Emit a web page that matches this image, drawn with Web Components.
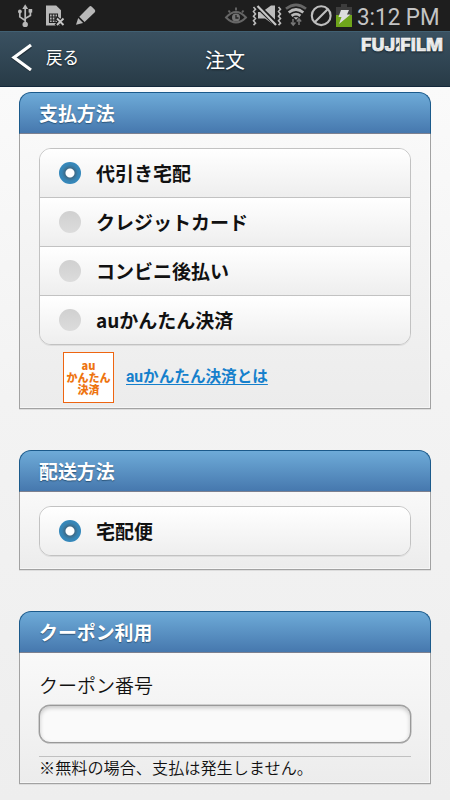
<!DOCTYPE html>
<html lang="ja">
<head>
<meta charset="utf-8">
<title>注文</title>
<style>
html{height:100%}
body{margin:0;width:450px;height:800px;overflow:hidden;background:linear-gradient(#fafafa 87px,#f3f3f3 400px,#eee 800px);font-family:"Noto Sans CJK JP","Noto Sans",sans-serif;color:#111}
</style>
</head>
<body>
<order-app></order-app>
<script>
const define = (name, html, setup) => customElements.define(name, class extends HTMLElement {
  constructor() {
    super();
    const t = document.createElement('template');
    t.innerHTML = html;
    this.attachShadow({ mode: 'open' }).append(t.content.cloneNode(true));
  }
  connectedCallback() { if (setup) setup(this, this.shadowRoot); }
});

define('status-bar', `<style>
:host{display:flex;height:31px;background:#1e1e1e;box-sizing:border-box}
svg{display:block;flex:none}
</style>
<svg width="450" height="31" viewBox="0 0 450 31">
  <g fill="none" stroke="#b8b8b8" stroke-width="1.7">
    <path d="M25.2 8v15M25.2 20.5l-5.4-3.6v-4.5M25.2 18.5l5.2-3v-4.3"/>
  </g>
  <g fill="#b8b8b8"><path d="M22.3 9l2.9-4.8L28.1 9z"/><circle cx="25.2" cy="24.4" r="2.7"/><circle cx="19.9" cy="11.5" r="1.9"/><path d="M28.6 9h3.6v3.6h-3.6z"/>
    <path d="M46 5.5h10.2l4.8 4.8v7l-1 8.2H46z"/>
    <path d="M76 24.8l2.2-6.8 4.9 4.9zM79.3 16.8L89.2 6.7q1.2-1.2 2.6 0l3 3q1 1.2 0 2.5L84.6 22.1z"/></g>
  <path d="M49.500 14h8v8.500h-8zM52.200 14v8.500M55 14v8.500M49.500 17h8M49.500 20h8" fill="#b8b8b8" stroke="#1e1e1e" stroke-width="1.1"/>
  <path d="M56 17.500l8.500 8.500M64.500 17.500l-8.500 8.500" stroke="#1e1e1e" stroke-width="4"/>
  <path d="M57 18.500l6.500 6.500M63.500 18.500L57 25" stroke="#c5c5c5" stroke-width="1.9"/>
  <g fill="none" stroke="#666" stroke-width="1.9"><path d="M226 17.500q10-11 20 0q-10 10-20 0z"/><path d="M228.500 10.500l1.500 2M236 7.500v3M243.500 10.500l-1.500 2"/></g>
  <circle cx="236" cy="17.500" r="4" fill="#737373"/><path d="M236 15v3h2.500" fill="none" stroke="#222" stroke-width="1.3"/>
  <path d="M258 12h4l9-6.500h4v18h-3l-7-5h-7z" fill="#bcbcbc"/>
  <path d="M257 5.500L277 25" stroke="#1e1e1e" stroke-width="5"/>
  <path d="M257.500 6L276 25" stroke="#c8c8c8" stroke-width="2.2"/>
  <path d="M253.500 7l2 2.300-2 2.300 2 2.300-2 2.300 2 2.300-2 2.300 2 2.300-2 2M278.500 7l2 2.300-2 2.300 2 2.300-2 2.300 2 2.300-2 2.300 2 2.300-2 2" fill="none" stroke="#bcbcbc" stroke-width="1.6"/>
  <g fill="none" stroke-width="2.700"><path d="M286 8.800q10-8 20 0" stroke="#666"/><path d="M288.700 12.500q7.300-6 14.600 0" stroke="#bababa"/><path d="M291.600 15.900q4.400-3.600 8.800 0" stroke="#bababa"/></g>
  <path d="M293.500 17.200h5l-2.500 2.500z" fill="#bababa"/>
  <path d="M293 19v6M291 22.500l2.200 2.500 2.200-2.500M299 25v-6M296.800 21.500l2.200-2.500 2.200 2.500" fill="none" stroke="#777" stroke-width="1.5"/>
  <g fill="none" stroke="#bebebe" stroke-width="2.1"><circle cx="321.200" cy="15.700" r="9.400"/><path d="M314.700 22.200l13-13"/></g>
  <path d="M336 7h5V4h6v3h5v8h-16z" fill="#3d3d3d"/><path d="M336 15h16v12h-16z" fill="#6fa51b"/>
  <path d="M341 10h8l-2 4.500h3.500L339 24l2.500-7h-3z" fill="#ddd"/>
  <text x="357" y="25" font-family="Roboto,sans-serif" font-size="24" textLength="82.500" lengthAdjust="spacingAndGlyphs" fill="#c4c4c4">3:12 PM</text>
</svg>`);

define('nav-bar', `<style>
:host{display:grid;grid-template-columns:1fr 50px 1fr;height:56px;box-sizing:border-box;border-bottom:1px solid #14283a;border-top:1px solid #416072;background:linear-gradient(#3a5161,#283b47);color:#fff;text-shadow:0 1px 2px #0008}
.back{display:flex;align-items:center;padding:0 0 4px 11px;gap:13px;font-size:16.500px;line-height:24px}
.back span{margin-top:-3px}
.title{font-size:20px;line-height:56px;text-align:center}
.brand{justify-self:end;padding:0 4px 0 0}
svg{display:block}
.brand svg{overflow:visible}
</style>
<div class="back"><svg width="22" height="30" viewBox="0 0 22 30"><path d="M20 3.500L3 15.500 20 27.500" fill="none" stroke="#0005" stroke-width="3.500"/><path d="M20 2L3 14.500 20 27" fill="none" stroke="#fff" stroke-width="3.2"/></svg><span>戻る</span></div>
<div class="title"><slot></slot></div>
<div class="brand"><svg width="86" height="32" viewBox="0 0 86 32"><text x="1" y="19.200" font-family="Inter,sans-serif" font-weight="800" font-size="17.500" textLength="82" lengthAdjust="spacingAndGlyphs" fill="#fff" stroke="#fff" stroke-width=".5">FUJIFILM</text><path d="M35 13.500l4-3v3l-4 3z" fill="#344c5b"/></svg></div>`);

define('form-panel', `<style>
:host{display:block;box-sizing:border-box;width:412px;border-radius:12px 12px 0 0;box-shadow:0 1px 0 #ddd}
h2{margin:0;height:42px;box-sizing:border-box;border:1px solid #1b5a8b;border-bottom-color:#7d8190;border-radius:12px 12px 0 0;padding-left:19px;font-size:18.900px;line-height:39px;font-weight:700;color:#fff;background:linear-gradient(#6eabd8,#4678ae);text-shadow:0 1px 1px #2c5579}
.body{box-sizing:border-box;height:calc(100% - 42px);border:1px solid #a2a2a2;border-top:0;padding:14px 19px 0;background:linear-gradient(#f9f9f9,#ececec);box-shadow:inset -1px -1px #fff8}
</style><h2></h2><div class="body"><slot></slot></div>`, (el, r) => r.querySelector('h2').textContent = el.getAttribute('heading'));

define('choice-group', `<style>
:host{display:flex;flex-direction:column;box-sizing:border-box;border:1px solid #c2c2c2;border-radius:12px;overflow:hidden;box-shadow:0 1px 0 #ddd}
::slotted(:not(:first-child)){border-top:1px solid #c2c2c2}
</style><slot></slot>`);

define('choice-row', `<style>
:host{display:flex;flex:1;box-sizing:border-box;align-items:center;padding-left:19px;gap:15px;background:linear-gradient(#fff,#eee);font-size:19px;font-weight:700;line-height:28px}
i{width:22px;height:22px;border-radius:50%;background:linear-gradient(#d0d0d0,#dcdcdc)}
:host([checked]) i{background:radial-gradient(circle,#fff 0 4px,#3e6c8a 5px,#3784b3 8px,#3589bd 11px)}
</style><i></i><span><slot></slot></span>`);

define('au-info', `<style>
:host{display:flex;align-items:center;gap:12px;padding:7px 0 0 24px}
.logo{box-sizing:border-box;width:51px;height:51px;border:1px solid #ee6511;background:#fff;color:#ee7410;font-size:11px;line-height:12px;font-weight:900;text-align:center;padding-top:6px;white-space:nowrap}
.logo div{margin:0 -4px}
a{font-size:15.600px;font-weight:700;line-height:22px;color:#1580cc;text-decoration:underline;text-decoration-thickness:1px;text-underline-offset:2px;margin-top:-3px}
a span{font-family:Roboto,sans-serif}
</style><div class="logo"><div>au</div><div>かんたん</div><div>決済</div></div><a><span>au</span>かんたん決済とは</a>`);

define('coupon-field', `<style>
:host{display:block}
label{display:block;font-size:19px;line-height:28px;padding-top:4px;font-weight:350}
input{display:block;box-sizing:border-box;width:372px;height:38px;margin:6px 0 13px;border:1px solid #999;border-radius:11px;background:#fafafa;box-shadow:inset 0 2px 4px #0003,0 0 0 .5px #aaa;outline:0}
p{margin:0;border-top:1px solid #c0c0c0;font-size:16.150px;line-height:21px;font-weight:350;white-space:nowrap}
</style><label>クーポン番号</label><input><p>※無料の場合、支払は発生しません。</p>`);

define('order-app', `<style>
:host{display:block;width:450px;height:800px}
main{display:flex;flex-direction:column;gap:41px;padding:5px 19px 0}
.pay{height:317px}.pay choice-group{height:197px}
.ship{height:120px}.ship choice-group{height:50px}
.coupon{height:173px}
</style>
<status-bar></status-bar>
<nav-bar>注文</nav-bar>
<main>
<form-panel class="pay" heading="支払方法">
<choice-group><choice-row checked>代引き宅配</choice-row><choice-row>クレジットカード</choice-row><choice-row>コンビニ後払い</choice-row><choice-row>auかんたん決済</choice-row></choice-group>
<au-info></au-info>
</form-panel>
<form-panel class="ship" heading="配送方法"><choice-group><choice-row checked>宅配便</choice-row></choice-group></form-panel>
<form-panel class="coupon" heading="クーポン利用"><coupon-field></coupon-field></form-panel>
</main>`);
</script>
</body>
</html>
